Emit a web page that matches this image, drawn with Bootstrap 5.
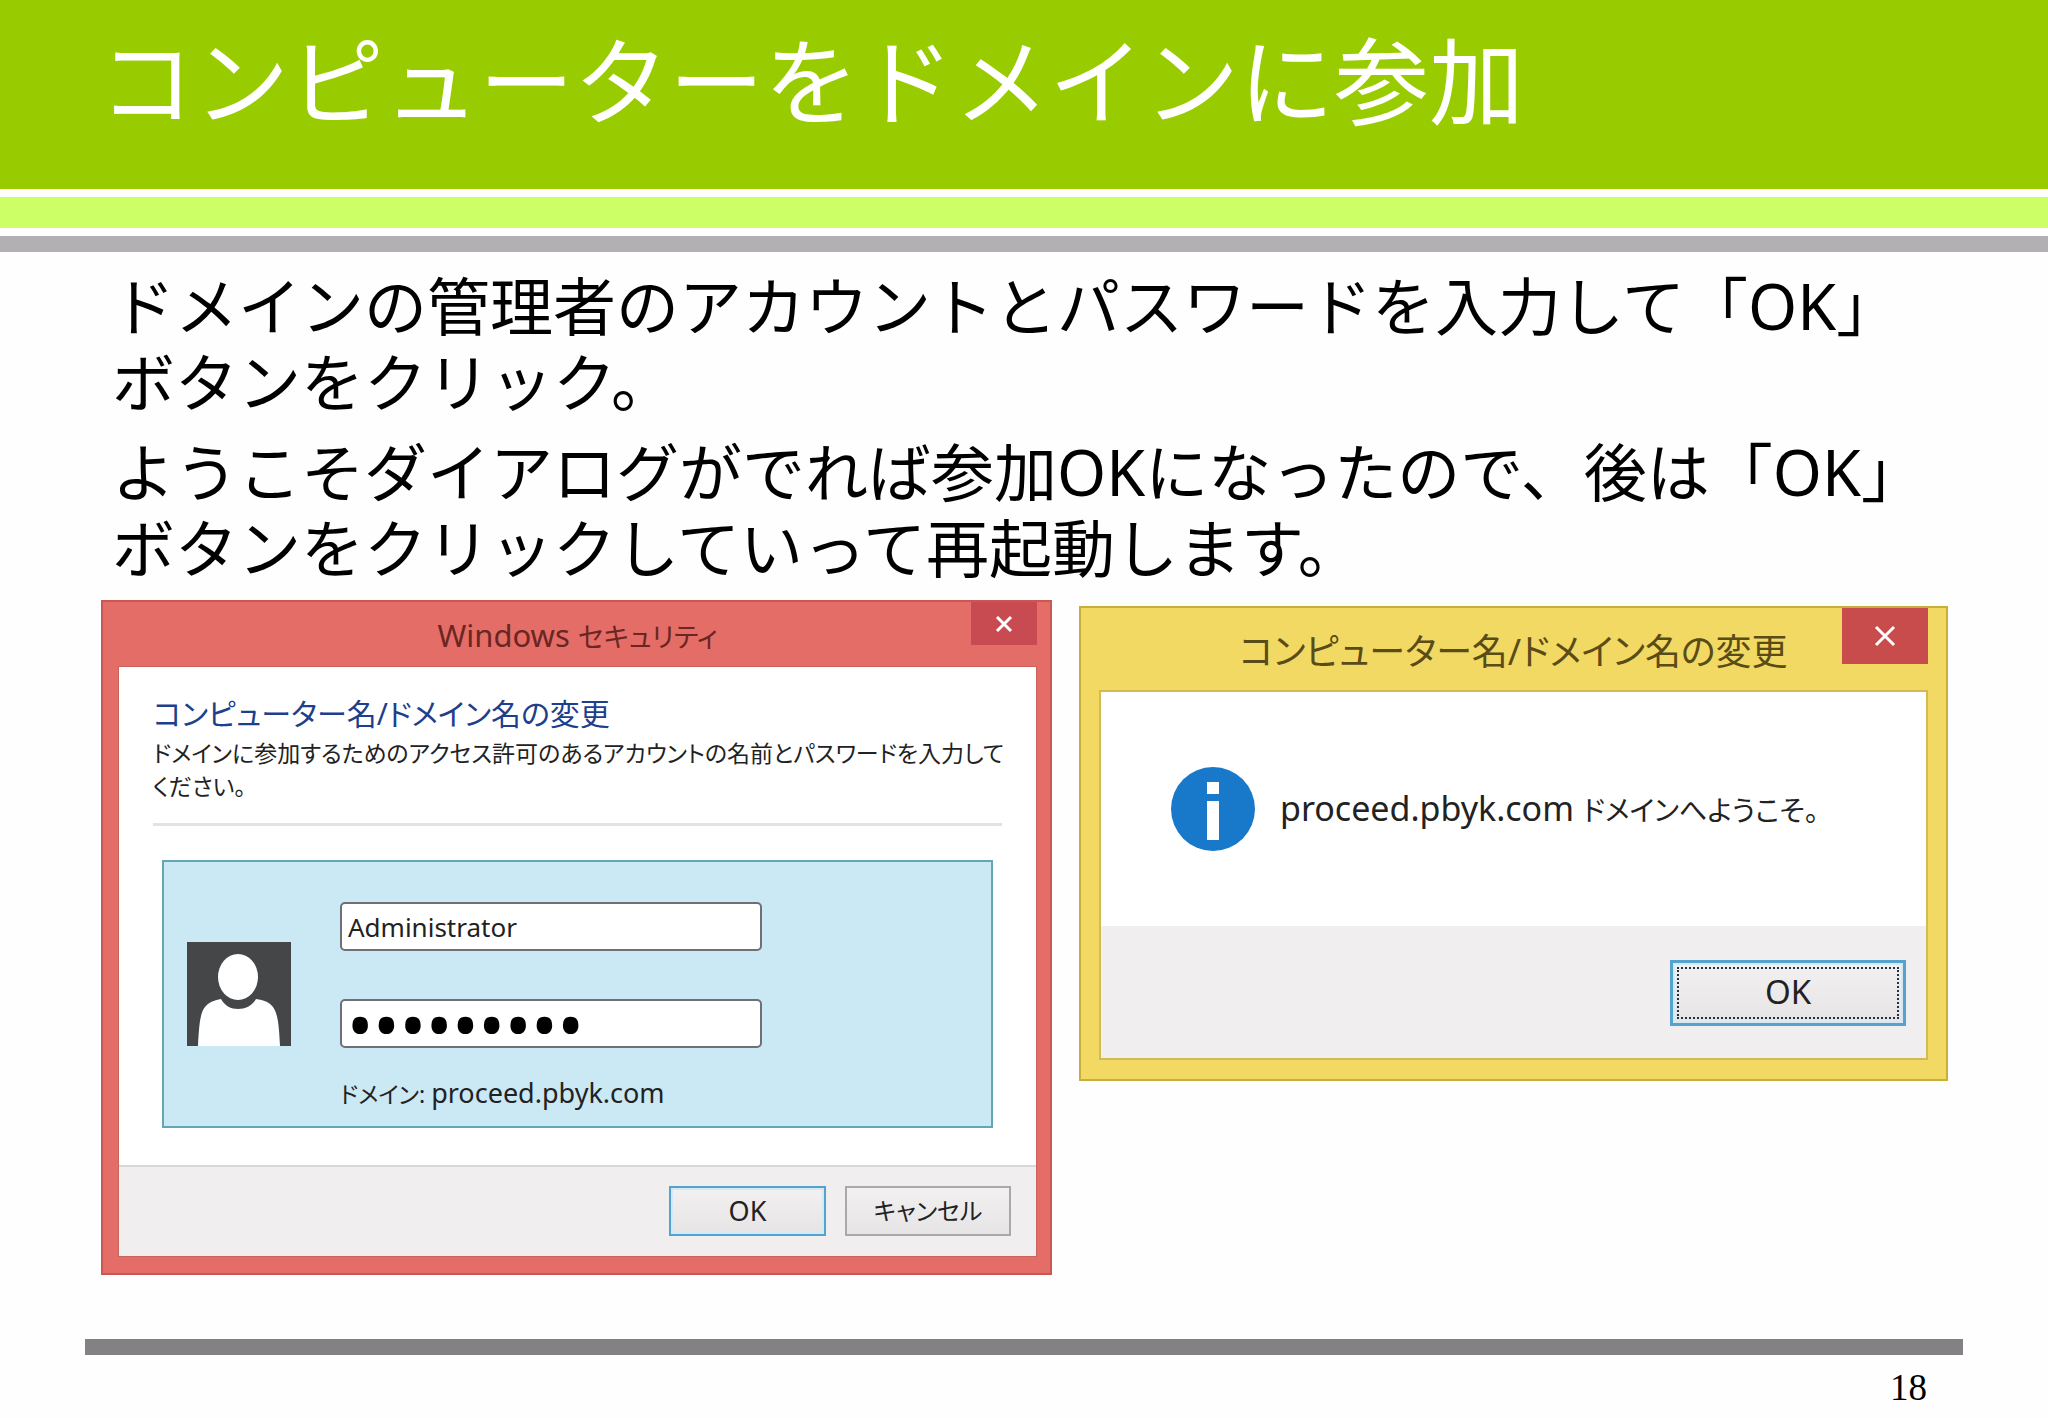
<!DOCTYPE html>
<html lang="ja">
<head>
<meta charset="utf-8">
<meta name="viewport" content="width=device-width, initial-scale=1">
<title>コンピューターをドメインに参加</title>
<link href="https://cdn.jsdelivr.net/npm/bootstrap@5.3.0/dist/css/bootstrap.min.css" rel="stylesheet">
<style>
  body { font-family: "Noto Sans", "Noto Sans CJK JP", sans-serif; color: #000; background: #fefefe; }
  .slide-head { background: #9c0; padding: 21px 100px 48px 99px; }
  .slide-head h1 { font-size: 95px; line-height: 120px; color: #fff; }
  .stripe-lime { height: 31px; background: #cf6; margin: 8px 0; }
  .stripe-gray { height: 16px; background: #b2b0b3; }
  .slide-text { padding: 16px 100px 0 112px; font-size: 63px; line-height: 76px; }
  .slide-text p { margin-bottom: 14px; white-space: nowrap; }
  .windows { padding: 0 100px 0 101px; gap: 27px; }

  .win { min-width: 0; font-feature-settings: "palt"; color: #222; line-height: 32px; }
  .win-bar { display: grid; grid-template-columns: 1fr auto 1fr; }
  .win-title { line-height: 40px; white-space: nowrap; }
  .win-close { border: 0; padding: 0; display: grid; place-items: center; justify-self: end; }
  .win-foot { background: #f0eeef; }
  .win-btn { border: 2px solid #aaa8a9; background: linear-gradient(#f2f0f1, #e6e4e5); color: #222; padding: 0; font-feature-settings: "palt"; }
  .win-btn.is-default { border-color: #55a3cc; box-shadow: inset 0 0 0 2px #d3eaf6; }

  .win-red { flex: 1 1 951px; border: 2px solid #c95753; background: #e46e67; padding: 0 13px 16px 15px; font-size: 27px; }
  .win-red .kana { font-size: 23px; }
  .win-red .win-bar { height: 64px; }
  .win-red .win-title { font-size: 31px; color: #6b2522; padding-top: 13px; }
  .win-red .win-title .kana { font-size: 27px; }
  .win-red .win-close { width: 66px; height: 43px; background: #c74b50; }
  .win-red .win-pane { background: #fff; border: 1px solid #c9625e; }
  .win-red .win-main { padding: 24px 34px 37px; }
  .win-red h2 { font-size: 30px; line-height: 46px; color: #1d3f8c; margin: 0; }
  .win-red .lead-text { font-size: 23px; line-height: 33px; border-bottom: 3px solid #e4e2e3; padding-bottom: 20px; margin: 0 0 34px; white-space: nowrap; }
  .login { background: #cbe8f5; border: 2px solid #64a5b8; margin: 0 9px; padding: 40px 23px 16px; gap: 49px; }
  .login-fields { width: 54%; }
  .login-box { height: 49px; border: 2px solid #6d7074; border-radius: 5px; padding: 0 6px; font-size: 26px; color: #222; background: #fff; }
  .login-box[type=password] { font-size: 70px; padding: 0 5px; color: #000; }
  .domain-line { margin-top: 29px; }
  .win-red .win-foot { border-top: 2px solid #d9d7d8; padding: 19px 25px 20px; gap: 19px; }
  .win-red .win-btn { height: 50px; width: 166px; font-size: 24px; }
  .win-red .win-btn.is-default { width: 157px; font-size: 27px; }

  .win-gold { flex: 1 1 869px; margin-top: 6px; border: 2px solid #c9ae3c; background: #f1d964; padding: 0 18px 19px; font-size: 34px; }
  .win-gold .kana { font-size: 28px; }
  .win-gold .win-bar { height: 82px; }
  .win-gold .win-title { font-size: 36px; color: #5a4c16; padding-top: 24px; }
  .win-gold .win-close { width: 86px; height: 56px; background: #c94c4c; }
  .win-gold .win-pane { background: #fff; border: 2px solid #d3bb4f; }
  .win-gold .win-main { padding: 75px 70px; gap: 25px; white-space: nowrap; }
  .win-gold .win-foot { padding: 34px 20px 32px; }
  .win-gold .win-btn { width: 236px; height: 66px; padding: 4px; font-size: 33px; border-width: 3px; }
  .focus-dots { border: 2px dotted #234; height: 100%; line-height: 46px; display: block; }

  .slide-foot { padding: 0 85px; }
  .foot-rule { height: 16px; background: #838184; }
  .page-no { font: 37px/44px "Liberation Serif", serif; padding: 11px 36px 8px 0; }
</style>
</head>
<body>
<div class="d-flex flex-column min-vh-100 overflow-hidden">
  <header>
    <div class="slide-head"><h1 class="fw-normal m-0 text-nowrap">コンピューターをドメインに参加</h1></div>
    <div class="stripe-lime"></div>
    <div class="stripe-gray"></div>
  </header>

  <main>
    <div class="slide-text">
      <p>ドメインの管理者のアカウントとパスワードを入力して「OK」<br>ボタンをクリック。</p>
      <p>ようこそダイアログがでれば参加OKになったので、後は「OK」<br>ボタンをクリックしていって再起動します。</p>
    </div>

    <div class="windows d-flex align-items-start">
      <section class="win win-red">
        <div class="win-bar">
          <span></span>
          <div class="win-title">Windows <span class="kana">セキュリティ</span></div>
          <button type="button" class="win-close" aria-label="閉じる">
            <svg width="18" height="18" viewBox="0 0 18 18" stroke="#fff" stroke-width="3"><path d="M2 2l14 14M16 2L2 16"/></svg>
          </button>
        </div>
        <form class="win-pane">
          <div class="win-main">
            <h2 class="fw-normal text-nowrap">コンピューター名/ドメイン名の変更</h2>
            <p class="lead-text">ドメインに参加するためのアクセス許可のあるアカウントの名前とパスワードを入力して<br>ください。</p>
            <div class="login d-flex align-items-center">
              <svg class="flex-shrink-0 mb-4" width="104" height="104" viewBox="0 0 104 104">
                <path fill="#454648" d="M0 0h104v104H0z"/>
                <ellipse cx="51" cy="35" rx="20" ry="23" fill="#fff"/>
                <path fill="#fff" d="M11 104C12 84 13 71 18 65C22 60 28 58 34 57C38 64 44 67 51 67C58 67 65 64 69 57C77 58 82 60 86 65C91 72 92 84 93 104z"/>
              </svg>
              <div class="login-fields">
                <label for="user" class="visually-hidden">ユーザー名</label>
                <input id="user" type="text" class="login-box d-block w-100" value="Administrator">
                <label for="pass" class="visually-hidden">パスワード</label>
                <input id="pass" type="password" class="login-box d-block w-100 mt-5" value="password1">
                <div class="domain-line text-nowrap"><span class="kana">ドメイン: </span>proceed.pbyk.com</div>
              </div>
            </div>
          </div>
          <div class="win-foot d-flex justify-content-end">
            <button type="button" class="win-btn is-default">OK</button>
            <button type="button" class="win-btn">キャンセル</button>
          </div>
        </form>
      </section>

      <section class="win win-gold">
        <div class="win-bar">
          <span></span>
          <div class="win-title">コンピューター名/ドメイン名の変更</div>
          <button type="button" class="win-close" aria-label="閉じる">
            <svg width="22" height="22" viewBox="0 0 22 22" stroke="#fff" stroke-width="3"><path d="M2 2l18 18M20 2L2 20"/></svg>
          </button>
        </div>
        <div class="win-pane">
          <div class="win-main d-flex align-items-center">
            <svg class="flex-shrink-0" width="84" height="84" viewBox="0 0 84 84">
              <circle cx="42" cy="42" r="42" fill="#1879cb"/>
              <path fill="#fff" d="M36 15h12v12H36zM36 34h12v39H36z"/>
            </svg>
            <span>proceed.pbyk.com <span class="kana">ドメインへようこそ。</span></span>
          </div>
          <div class="win-foot d-flex justify-content-end">
            <button type="button" class="win-btn is-default"><span class="focus-dots">OK</span></button>
          </div>
        </div>
      </section>
    </div>
  </main>

  <footer class="slide-foot mt-auto">
    <div class="foot-rule"></div>
    <div class="page-no text-end">18</div>
  </footer>
</div>
<script src="https://cdn.jsdelivr.net/npm/bootstrap@5.3.0/dist/js/bootstrap.bundle.min.js"></script>
</body>
</html>
